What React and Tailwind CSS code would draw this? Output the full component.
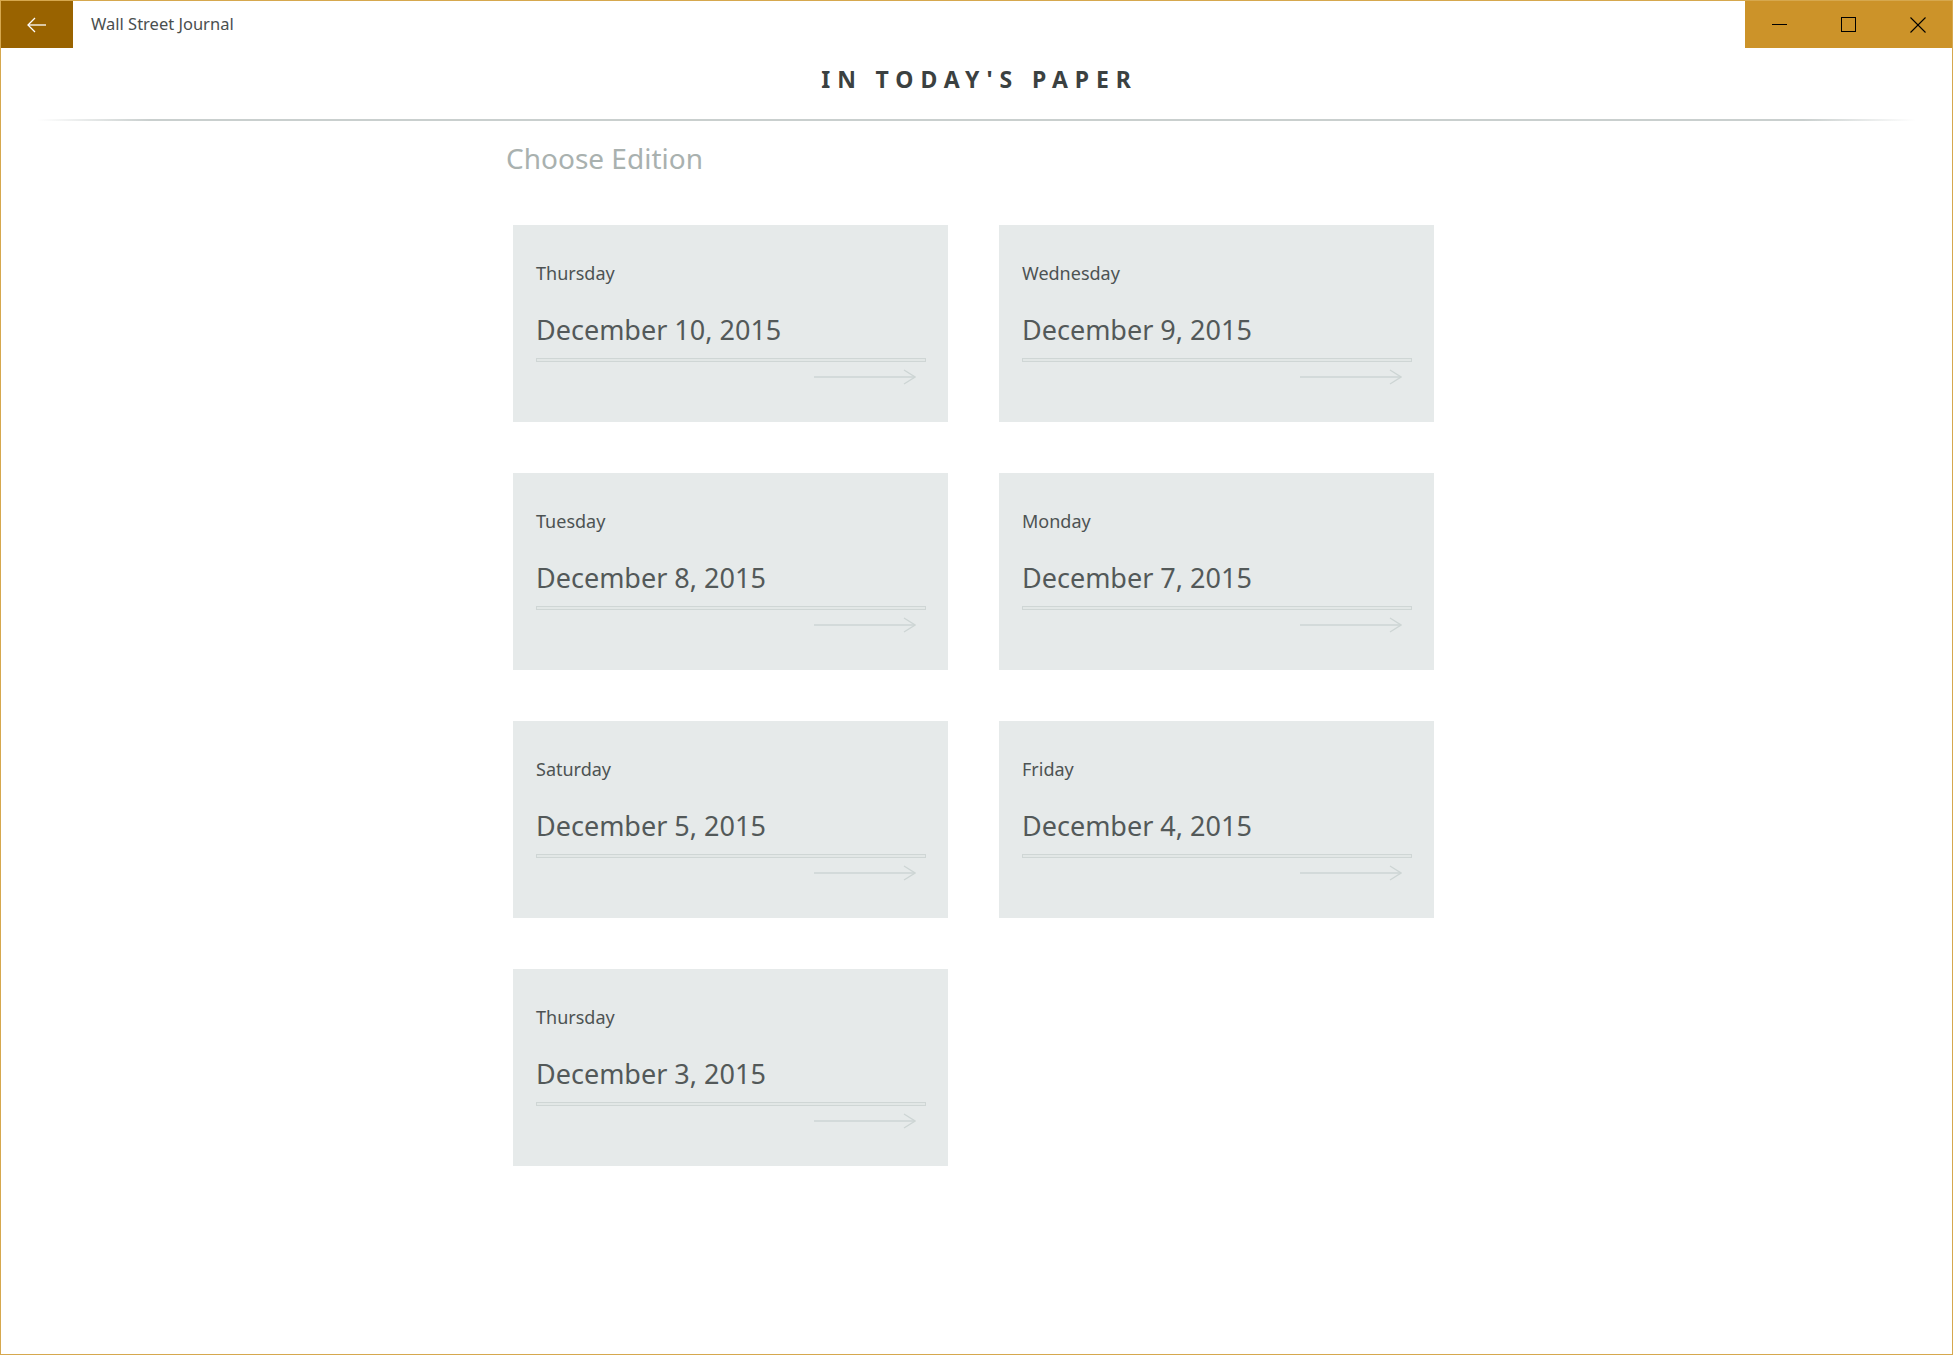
import React from 'react';

const editions = [
    { day: 'Thursday', date: 'December 10, 2015' },
    { day: 'Wednesday', date: 'December 9, 2015' },
    { day: 'Tuesday', date: 'December 8, 2015' },
    { day: 'Monday', date: 'December 7, 2015' },
    { day: 'Saturday', date: 'December 5, 2015' },
    { day: 'Friday', date: 'December 4, 2015' },
    { day: 'Thursday', date: 'December 3, 2015' },
];

function EditionCard({ day, date }) {
    return (
        <div className="w-[435px] h-[197px] bg-[#e6eaea] pl-[23px] pr-[22px] pt-[36px] flex flex-col">
            <div className="text-[18px] leading-[24px] text-[#4d5353]">{day}</div>
            <div className="mt-[27px] text-[27px] leading-[36px] text-[#535959]">{date}</div>
            <div className="mt-[10px] h-[4px] border border-[#cfd6d5] bg-[#e2e7e6]" />
            <div className="mt-[7px] flex justify-end pr-[10px]">
                <svg width="102" height="16" viewBox="0 0 102 16" fill="none" stroke="#cdd5d4" strokeWidth="1.3">
                    <line x1="0" y1="8" x2="101" y2="8" />
                    <polyline points="90,1 101,8 90,15" />
                </svg>
            </div>
        </div>
    );
}

export default function App() {
    return (
        <div className="w-[1953px] h-[1355px] border border-[#d6a84e] bg-white flex flex-col font-['Noto_Sans',sans-serif] overflow-hidden">
            {/* 標題列 */}
            <div className="h-[47px] flex items-stretch shrink-0">
                <div className="w-[72px] bg-[#996300] flex items-center justify-center">
                    <svg width="20" height="16" viewBox="0 0 20 16" fill="none" stroke="white" strokeWidth="1.3">
                        <line x1="1" y1="8" x2="19" y2="8" />
                        <polyline points="8,1 1,8 8,15" />
                    </svg>
                </div>
                <div className="ml-[18px] flex items-center text-[16.5px] text-[#4a4f4f]">Wall Street Journal</div>
                <div className="ml-auto flex bg-[#cc9329]">
                    <div className="w-[69px] flex items-center justify-center">
                        <div className="w-[15px] h-[1px] bg-black" />
                    </div>
                    <div className="w-[69px] flex items-center justify-center">
                        <div className="w-[15px] h-[15px] border border-black" />
                    </div>
                    <div className="w-[69px] flex items-center justify-center">
                        <svg width="16" height="16" viewBox="0 0 16 16" stroke="black" strokeWidth="1.1">
                            <line x1="0.5" y1="0.5" x2="15.5" y2="15.5" />
                            <line x1="15.5" y1="0.5" x2="0.5" y2="15.5" />
                        </svg>
                    </div>
                </div>
            </div>

            {/* 頁首 */}
            <div className="pt-[16px] pl-[6px] text-center text-[23px] leading-[30px] font-bold tracking-[0.3em] text-[#3b4141]">
                IN TODAY'S PAPER
            </div>
            <div className="mt-[25px] mx-[36px] h-[2px] bg-[linear-gradient(to_right,transparent,#c9cfce_6%,#c9cfce_94%,transparent)]" />

            {/* 內容 */}
            <div className="ml-[505px] mt-[19px]">
                <div className="text-[28px] leading-[36px] text-[#a9b1af]">Choose Edition</div>
                <div className="mt-[49px] ml-[7px] grid grid-cols-[435px_435px] gap-[51px]">
                    {editions.map((e, i) => (
                        <EditionCard key={i} day={e.day} date={e.date} />
                    ))}
                </div>
            </div>
        </div>
    );
}
